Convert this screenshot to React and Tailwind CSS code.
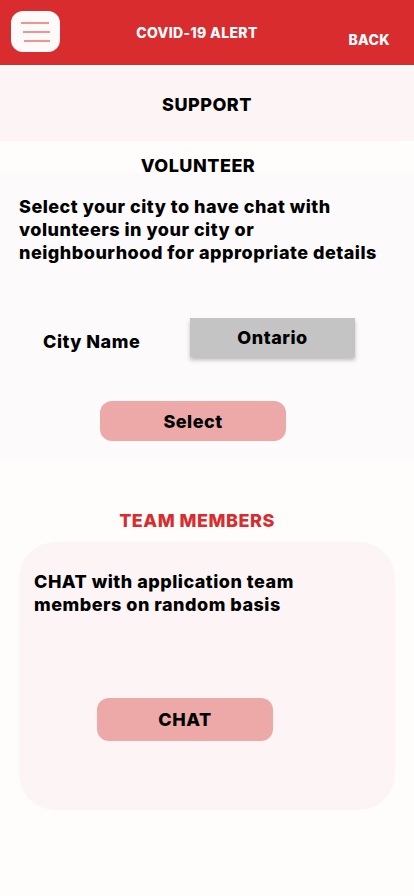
import React from "react";

const App = () => {
  return (
    <div className="min-h-[896px] w-[414px] bg-[#fffdfc] font-['Inter',sans-serif] font-extrabold tracking-[0.5px] text-black">
      {/* Header */}
      <header className="h-[65px] bg-[#d82c2e] flex items-start relative">
        <button className="absolute left-[11px] top-[11px] w-[49px] h-[41px] rounded-[12px] bg-[#fffafa] flex flex-col justify-center gap-[7px] pl-[10px]">
          <span className="block w-[28px] h-[2px] bg-[#ee9494]" />
          <span className="block w-[27px] h-[2px] bg-[#ee9494] ml-[2px]" />
          <span className="block w-[26px] h-[2px] bg-[#ee9494] ml-[3px]" />
        </button>
        <h1 className="w-full text-center text-white text-[14px] tracking-[0.35px] pt-[22px] pr-[20px]">COVID-19 ALERT</h1>
        <span className="absolute right-[24px] top-[29px] text-white text-[14px] tracking-[0.35px]">BACK</span>
      </header>
      <div className="h-[2px] bg-white" />

      {/* Support */}
      <section className="h-[74px] bg-[#fdf4f5] flex items-center justify-center">
        <h2 className="text-[18px]">SUPPORT</h2>
      </section>

      {/* Volunteer */}
      <h3 className="text-center text-[18px] h-[31px] pt-[14px] pr-[18px] leading-[22px]">VOLUNTEER</h3>
      <section className="bg-[#fcfafb] h-[288px] pt-[23px]">
        <p className="px-[19px] pr-[20px] text-[18px] leading-[23px]">
          Select your city to have chat with volunteers in your city or neighbourhood for appropriate details
        </p>
        <div className="flex items-center mt-[54px]">
          <span className="ml-[43px] w-[147px] text-[18px] pt-[8px]">City Name</span>
          <div className="w-[165px] h-[39px] bg-[#c4c4c4] shadow-[0_3px_4px_rgba(0,0,0,0.25)] flex items-center justify-center text-[18px]">
            Ontario
          </div>
        </div>
        <button className="block ml-[100px] mt-[44px] w-[186px] h-[40px] rounded-[12px] bg-[#eda8a8] text-[18px]">
          Select
        </button>
      </section>

      {/* Team members */}
      <h3 className="text-center text-[#d82c2e] text-[18px] mt-[50px] pr-[20px] leading-[22px]">TEAM MEMBERS</h3>
      <div className="mx-[19px] mt-[10px] h-[268px] rounded-[36px] bg-[#fdf4f5] pt-[28px]">
        <p className="px-[15px] text-[18px] leading-[23px] pr-[60px]">
          CHAT with application team members on random basis
        </p>
        <button className="block ml-[78px] mt-[82px] w-[176px] h-[43px] rounded-[12px] bg-[#eda8a8] text-[18px]">
          CHAT
        </button>
      </div>
    </div>
  );
};

export default App;
